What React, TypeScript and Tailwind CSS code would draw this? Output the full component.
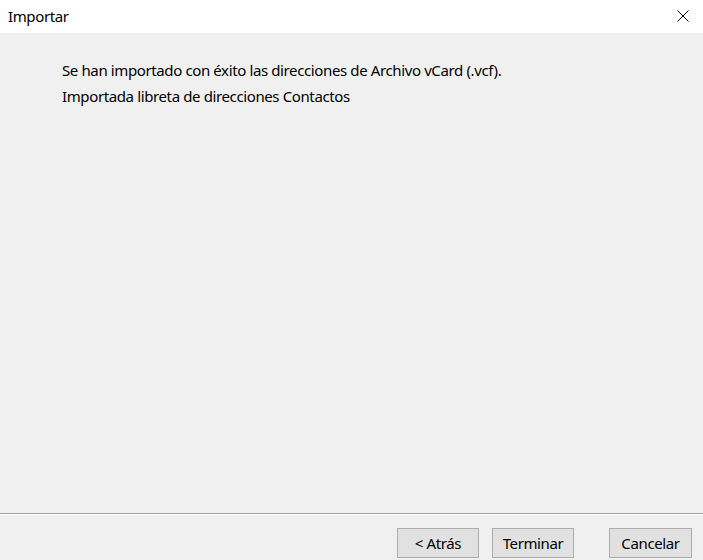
export default function App() {
  const font = { fontFamily: '"Noto Sans", "Open Sans", sans-serif' }
  return (
    <div className="flex h-[560px] w-[703px] flex-col overflow-hidden bg-[#f0f0f0] text-[15px] tracking-[-0.38px] text-black" style={font}>
      {/* Title bar */}
      <div className="flex h-[33px] shrink-0 items-center justify-between bg-white pl-[8px] pr-[14px]">
        <span className="leading-none">Importar</span>
        <svg width="12" height="12" viewBox="0 0 12 12" className="mt-[-2px]">
          <path d="M0.5 0.5 L11.5 11.5 M11.5 0.5 L0.5 11.5" stroke="#000" strokeWidth="1" />
        </svg>
      </div>

      {/* Content */}
      <div className="flex-1 pl-[62px] pt-[24px] leading-[26px]">
        <p>Se han importado con éxito las direcciones de Archivo vCard (.vcf).</p>
        <p>Importada libreta de direcciones Contactos</p>
      </div>

      {/* Footer */}
      <div className="h-px shrink-0 bg-[#a0a0a0]" />
      <div className="h-px shrink-0 bg-white" />
      <div className="flex h-[45px] shrink-0 items-start justify-end pr-[11px] pt-[13px]">
        <button className="h-[30px] w-[82px] border border-[#adadad] bg-[#e1e1e1] leading-none">&lt; Atrás</button>
        <button className="ml-[13px] h-[30px] w-[82px] border border-[#adadad] bg-[#e1e1e1] leading-none">Terminar</button>
        <button className="ml-[35px] h-[30px] w-[83px] border border-[#adadad] bg-[#e1e1e1] leading-none">Cancelar</button>
      </div>
    </div>
  )
}
